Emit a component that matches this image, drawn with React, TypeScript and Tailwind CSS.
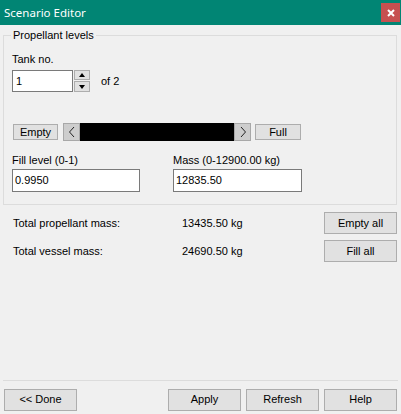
import React from "react";

const btn =
  "flex items-center justify-center bg-[#e1e1e1] border border-[#adadad] text-black box-border";

function Arrow({ dir }: { dir: "left" | "right" }) {
  return (
    <div className="w-[17px] h-[18px] bg-[#cdcdcd] border border-[#a8a8a8] box-border flex items-center justify-center">
      <svg width="8" height="12" viewBox="0 0 8 12">
        {dir === "left" ? (
          <path d="M6 1 L1.5 6 L6 11" fill="none" stroke="#222" strokeWidth="1" />
        ) : (
          <path d="M2 1 L6.5 6 L2 11" fill="none" stroke="#222" strokeWidth="1" />
        )}
      </svg>
    </div>
  );
}

export default function App() {
  return (
    <div
      className="w-[401px] h-[414px] bg-[#f0f0f0] flex flex-col text-[11px] leading-[13px] text-black overflow-hidden"
      style={{ fontFamily: '"Liberation Sans", Arial, sans-serif' }}
    >
      {/* Title bar */}
      <div className="h-[25px] shrink-0 bg-[#018574] flex items-center justify-between pl-[4px] pr-[1px]">
        <span
          className="text-white text-[11.5px] leading-[16px]"
          style={{ fontFamily: '"Noto Sans", "Open Sans", sans-serif' }}
        >
          Scenario Editor
        </span>
        <div className="w-[19px] h-[19px] bg-[#c75050] flex items-center justify-center">
          <svg width="8" height="8" viewBox="0 0 8 8">
            <path d="M1 1 L7 7 M7 1 L1 7" stroke="#fff" strokeWidth="2" />
          </svg>
        </div>
      </div>

      {/* Group box */}
      <div className="relative mt-[10px] ml-[3px] w-[394px] h-[170px] border border-[#dcdcdc] box-border pl-[8px] pt-[17px]">
        <span className="absolute -top-[7px] left-[7px] px-[2px] bg-[#f0f0f0]">Propellant levels</span>
        <div>Tank no.</div>
        <div className="flex items-center mt-[4px] h-[22px]">
          <div className="w-[61px] h-[22px] bg-white border border-[#7a7a7a] box-border flex items-center pl-[3px]">
            1
          </div>
          <div className="ml-[1px] flex flex-col gap-[1px]">
            <div className="w-[16px] h-[10px] bg-[#e1e1e1] border border-[#adadad] box-border flex items-center justify-center">
              <svg width="6" height="4" viewBox="0 0 6 4">
                <path d="M0 4 L3 0 L6 4 Z" fill="#000" />
              </svg>
            </div>
            <div className="w-[16px] h-[11px] bg-[#e1e1e1] border border-[#adadad] box-border flex items-center justify-center">
              <svg width="6" height="4" viewBox="0 0 6 4">
                <path d="M0 0 L3 4 L6 0 Z" fill="#000" />
              </svg>
            </div>
          </div>
          <span className="ml-[11px]">of 2</span>
        </div>

        <div className="flex items-center mt-[31px] h-[18px]">
          <div className={`${btn} ml-[1px] w-[45px] h-[16px]`}>Empty</div>
          <div className="ml-[5px] flex w-[188px] h-[18px]">
            <Arrow dir="left" />
            <div className="flex-1 bg-black" />
            <Arrow dir="right" />
          </div>
          <div className={`${btn} ml-[4px] w-[46px] h-[16px]`}>Full</div>
        </div>

        <div className="flex mt-[13px]">
          <div className="flex flex-col w-[128px]">
            <span>Fill level (0-1)</span>
            <div className="mt-[2px] h-[23px] bg-white border border-[#7a7a7a] box-border flex items-center pl-[2px]">
              0.9950
            </div>
          </div>
          <div className="flex flex-col w-[129px] ml-[33px]">
            <span>Mass (0-12900.00 kg)</span>
            <div className="mt-[2px] h-[23px] bg-white border border-[#7a7a7a] box-border flex items-center pl-[2px]">
              12835.50
            </div>
          </div>
        </div>
      </div>

      {/* Totals */}
      <div className="mt-[7px] flex items-center h-[22px] pl-[13px] pr-[4px]">
        <span className="w-[169px]">Total propellant mass:</span>
        <span className="flex-1">13435.50 kg</span>
        <div className={`${btn} w-[73px] h-[22px]`}>Empty all</div>
      </div>
      <div className="mt-[6px] flex items-center h-[22px] pl-[13px] pr-[4px]">
        <span className="w-[169px]">Total vessel mass:</span>
        <span className="flex-1">24690.50 kg</span>
        <div className={`${btn} w-[73px] h-[22px]`}>Fill all</div>
      </div>

      {/* Footer */}
      <div className="mt-auto">
        <div className="mx-[3px] border-t border-[#dcdcdc]" />
        <div className="flex items-center pt-[7px] pb-[3px] px-[4px] h-[33px] box-border">
          <div className={`${btn} w-[73px] h-[22px]`}>&lt;&lt; Done</div>
          <div className="ml-auto flex gap-[5px]">
            <div className={`${btn} w-[73px] h-[22px]`}>Apply</div>
            <div className={`${btn} w-[73px] h-[22px]`}>Refresh</div>
            <div className={`${btn} w-[73px] h-[22px]`}>Help</div>
          </div>
        </div>
      </div>
    </div>
  );
}
